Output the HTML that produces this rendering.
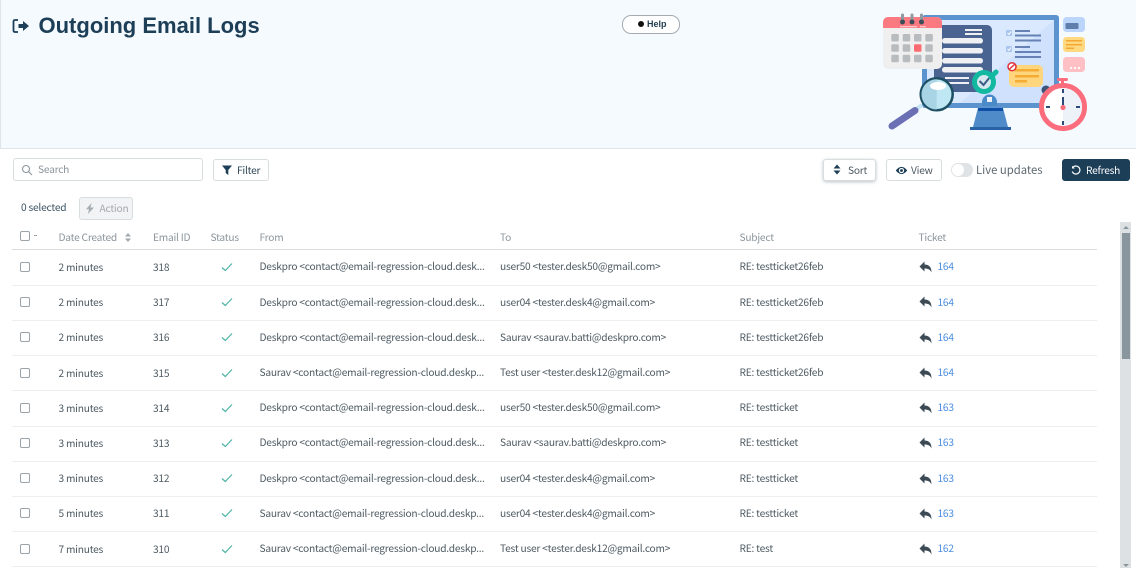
<!DOCTYPE html>
<html><head><meta charset="utf-8">
<style>
html,body{margin:0;padding:0;background:#fff}
body{width:1136px;height:568px;position:relative;overflow:hidden;font-family:"Noto Sans CJK JP","Liberation Sans",sans-serif;font-size:10.2px;letter-spacing:-.23px;color:#4d5a62}
.a{position:absolute;white-space:nowrap}
.t{line-height:14px;margin-top:-1px}
.hd{color:#8b959c;top:231px}
.sep{position:absolute;left:12px;width:1085px;height:1px;background:#eceeef}
.cb{position:absolute;left:20px;width:8px;height:8px;border:1px solid #9aa3a9;border-radius:2px;background:#fff}
.btn{position:absolute;box-sizing:border-box;background:#fff;border:1px solid #d8dde0;border-radius:3px;height:22px;top:159px;color:#2c4657;line-height:19px}
.lk{color:#4d8ee0}
svg[width="12"][height="10"]{margin-top:-1px}
</style></head><body>
<div class="a" style="left:0;top:0;width:1136px;height:148px;background:#f5faff;border-left:1px solid #dfe4e8;border-bottom:1px solid #dfe4e8;box-sizing:content-box"></div>
<svg class="a" style="left:12px;top:18px" width="18" height="16" viewBox="0 0 18 16"><path d="M6 2H3Q1.500 2 1.500 3.500V12.500Q1.500 14 3 14H6" fill="none" stroke="#1c3e57" stroke-width="1.800"/><path d="M6.500 6H11V3L17 8L11 13V10H6.500Z" fill="#1c3e57"/></svg>
<div class="a" style="left:38.500px;top:11px;font:bold 22px/30px 'Liberation Sans',sans-serif;color:#1c3e57;letter-spacing:0">Outgoing Email Logs</div>
<div class="a" style="left:622px;top:15px;width:56px;height:17px;border:1px solid #a4abb2;border-radius:9px;background:#fff"></div>
<div class="a" style="left:638px;top:21px;width:6px;height:6px;border-radius:3px;background:#111"></div>
<div class="a" style="left:647px;top:17px;font:bold 9px/14px 'Liberation Sans',sans-serif;letter-spacing:0;color:#1f3a4d">Help</div>

<svg class="a" style="left:860px;top:0" width="250" height="140" viewBox="860 0 250 140">
<rect x="922" y="15" width="137" height="93" rx="3" fill="#5b93cf"/>
<rect x="927" y="20" width="127" height="83" fill="#cfe1fd"/>
<path d="M927 20H1054L960 103H927Z" fill="#dbe9fe"/>
<rect x="934" y="25" width="58" height="67" rx="5" fill="#4a6491"/>
<g fill="#eef0f3"><rect x="965" y="29" width="17" height="2"/><rect x="965" y="33" width="17" height="2"/><rect x="942" y="38" width="41" height="5.500" rx="2.700"/><rect x="942" y="48" width="41" height="5.500" rx="2.700"/><rect x="942" y="58" width="41" height="5.500" rx="2.700"/><rect x="942" y="67" width="41" height="5.500" rx="2.700"/><rect x="945" y="77" width="24" height="2"/><rect x="945" y="82" width="24" height="2"/></g>
<g fill="#a9c4ef"><rect x="1006" y="30" width="6" height="6" rx="1"/><rect x="1006" y="46" width="6" height="6" rx="1"/></g>
<path d="M1007.500 33L1009 34.500L1011 31.500M1007.500 49L1009 50.500L1011 47.500" fill="none" stroke="#fff" stroke-width="1"/>
<g fill="#6682b4"><rect x="1015" y="30" width="15" height="2"/><rect x="1015" y="34.500" width="26" height="2"/><rect x="1015" y="39.500" width="26" height="2"/><rect x="1015" y="46" width="15" height="2"/><rect x="1015" y="51" width="26" height="2"/><rect x="1015" y="56" width="26" height="2"/></g>
<rect x="1009" y="65" width="34" height="22" rx="5" fill="#ffd67e"/>
<g fill="#f5ac35"><rect x="1015" y="69" width="24" height="2.500"/><rect x="1015" y="75" width="24" height="2.500"/><rect x="1015" y="80" width="12" height="2.500"/></g>
<circle cx="1012" cy="66.700" r="4" fill="#fff" stroke="#e0303a" stroke-width="1.500"/><path d="M1009.500 69L1014.500 64.500" stroke="#e0303a" stroke-width="1.500"/>
<path d="M978 108H1003L1008 127H973Z" fill="#4f8bc9"/><rect x="978" y="108" width="25" height="3" fill="#0f4fa8"/>
<rect x="970" y="127" width="41" height="3" fill="#2a62a8"/>
<path d="M982 106V102A7.500 7.500 0 0 1 997 102V106Z" fill="#4a8ac8"/><rect x="987" y="97" width="5" height="5" fill="#eef3fa"/>
<circle cx="984" cy="82" r="9.500" fill="#d5e8ee" stroke="#12b8a0" stroke-width="5"/>
<path d="M979.500 81L983.500 85L990 77" fill="none" stroke="#3d5d85" stroke-width="2"/><path d="M991 77L996 72" stroke="#12b8a0" stroke-width="5" stroke-linecap="round"/>
<rect x="883" y="17" width="59" height="52" rx="5" fill="#f0efef"/>
<path d="M883 28V22A5 5 0 0 1 888 17H937A5 5 0 0 1 942 22V28Z" fill="#fb7a82"/>
<g fill="#fdc4c7"><rect x="900" y="26" width="17" height="1.300"/><rect x="920" y="26" width="6" height="1.300"/></g>
<g stroke="#8f9aa2" stroke-width="3" stroke-linecap="round"><path d="M902.500 15V22M912 15V22M921.500 15V22"/></g>
<g fill="#3d4d57"><circle cx="902.500" cy="22" r="2.500"/><circle cx="912" cy="22" r="2.500"/><circle cx="921.500" cy="22" r="2.500"/></g>
<g fill="#b8bcbf"><rect x="891.300" y="34" width="7.500" height="7.500" rx="1.200"/><rect x="902.700" y="34" width="7.500" height="7.500" rx="1.200"/><rect x="914" y="34" width="7.500" height="7.500" rx="1.200"/><rect x="925.300" y="34" width="7.500" height="7.500" rx="1.200"/><rect x="891.300" y="44.300" width="7.500" height="7.500" rx="1.200"/><rect x="902.700" y="44.300" width="7.500" height="7.500" rx="1.200"/><rect x="925.300" y="44.300" width="7.500" height="7.500" rx="1.200"/><rect x="891.300" y="54.700" width="7.500" height="7.500" rx="1.200"/><rect x="902.700" y="54.700" width="7.500" height="7.500" rx="1.200"/><rect x="914" y="54.700" width="7.500" height="7.500" rx="1.200"/><rect x="925.300" y="54.700" width="7.500" height="7.500" rx="1.200"/></g>
<rect x="914" y="44.300" width="7.500" height="7.500" rx="1.200" fill="#fb6c72"/>
<path d="M915 110L922 105" stroke="#c3e4f2" stroke-width="4"/>
<path d="M892 126L915 110.500" stroke="#6b70b5" stroke-width="7" stroke-linecap="round"/>
<circle cx="936.700" cy="94.300" r="16" fill="#bfe6f3" stroke="#1d4f63" stroke-width="2.500"/>
<path d="M921.500 94.300A15 15 0 0 1 936.700 79.300V109.500A15 15 0 0 1 921.500 94.300Z" fill="#a9d4e6"/>
<ellipse cx="938" cy="86" rx="8" ry="4" fill="#fff"/>
<rect x="1063" y="17" width="22" height="15" rx="3.500" fill="#bcd5fb"/><rect x="1065.500" y="23" width="13" height="6" rx="1" fill="#5f7eab"/>
<rect x="1063" y="37" width="22" height="15" rx="3.500" fill="#ffd980"/><g fill="#f5a735"><rect x="1066" y="40" width="16" height="1.500"/><rect x="1066" y="44" width="16" height="1.500"/><rect x="1066" y="47.500" width="8" height="1.500"/></g>
<rect x="1063" y="57" width="22" height="15" rx="3.500" fill="#ffc0c5"/><g fill="#fff"><circle cx="1071" cy="68" r="1.100"/><circle cx="1075" cy="68" r="1.100"/><circle cx="1079" cy="68" r="1.100"/></g>
<circle cx="1046" cy="90" r="4.500" fill="#3b5578"/>
<rect x="1057" y="78" width="11" height="3" rx="1.500" fill="#fb6c7c"/><rect x="1061" y="80" width="3" height="5" fill="#fb6c7c"/>
<circle cx="1063" cy="107" r="21.500" fill="#fff" stroke="#fb6c7c" stroke-width="5"/>
<path d="M1063 88A19 19 0 0 1 1063 126Z" fill="#edf2f8"/>
<g fill="#2c4a7a"><rect x="1062" y="89" width="2" height="4"/><rect x="1062" y="121" width="2" height="4"/><rect x="1046" y="106" width="4" height="2"/><rect x="1076" y="106" width="4" height="2"/><rect x="1062" y="97" width="2" height="10"/></g>
<circle cx="1063" cy="107.500" r="2.600" fill="#fb6c7c"/>
</svg>

<div class="a" style="left:13px;top:158px;width:188px;height:21px;border:1px solid #d8dde0;border-radius:3px"></div>
<svg class="a" style="left:21px;top:164px" width="12" height="12" viewBox="0 0 12 12"><circle cx="5" cy="5" r="3.500" fill="none" stroke="#8d979e" stroke-width="1.100"/><path d="M7.700 7.700L11 11" stroke="#8d979e" stroke-width="1.100"/></svg>
<div class="a t" style="left:38px;top:163px;color:#8b959c">Search</div>
<div class="btn" style="left:213px;width:56px"></div>
<svg class="a" style="left:222px;top:165px" width="10" height="10" viewBox="0 0 10 10"><path d="M0 .5H10L6.300 5V10L3.700 8V5Z" fill="#1c3e57"/></svg>
<div class="a t" style="left:237px;top:163.500px;color:#2c4657">Filter</div>

<div class="btn" style="left:823px;width:53px;box-shadow:0 1px 3px rgba(60,80,95,.35)"></div>
<svg class="a" style="left:833px;top:164px" width="8" height="11" viewBox="0 0 8 11"><path d="M4 .5L7.500 4.500H.5ZM4 10.500L7.500 6.500H.5Z" fill="#1c3e57"/></svg>
<div class="a t" style="left:848px;top:163.500px">Sort</div>
<div class="btn" style="left:886px;width:56px"></div>
<svg class="a" style="left:894.500px;top:164.500px" width="13" height="11" viewBox="0 0 11 10"><path d="M.3 5Q5.500-1.500 10.700 5Q5.500 11.500 .3 5Z" fill="#1c3e57"/><circle cx="5.500" cy="5" r="2.400" fill="#fff"/><circle cx="5.500" cy="5" r="1.300" fill="#1c3e57"/></svg>
<div class="a t" style="left:911px;top:163.500px">View</div>
<div class="a" style="left:951px;top:163px;width:22px;height:14px;border-radius:7px;background:#dfe3e6"></div>
<div class="a" style="left:952px;top:164px;width:12px;height:12px;border-radius:6px;background:#fff"></div>
<div class="a" style="left:976px;top:162px;font-size:11.300px;letter-spacing:0;line-height:16px;color:#5d6970">Live updates</div>
<div class="a" style="left:1062px;top:159px;width:68px;height:22px;border-radius:3px;background:#1c3e57"></div>
<svg class="a" style="left:1071px;top:165px" width="10" height="10" viewBox="0 0 10 10"><path d="M2.300 2A4 4 0 1 1 1.200 6.500" fill="none" stroke="#fff" stroke-width="1.200"/><path d="M1 .7V3.500H3.800Z" fill="#fff"/></svg>
<div class="a t" style="left:1086px;top:163.500px;color:#fff">Refresh</div>

<div class="a t" style="left:21px;top:201px;color:#3c5363">0 selected</div>
<div class="a" style="left:79px;top:197px;width:52px;height:21px;border:1px solid #d8dde0;border-radius:3px;background:#f2f3f4"></div>
<svg class="a" style="left:86px;top:202.500px" width="8" height="11" viewBox="0 0 8 11"><path d="M5.500 0L0 6.300H3L2 11L8 4.500H4.500Z" fill="#a6adb2"/></svg>
<div class="a t" style="left:99.500px;top:202px;color:#a2a9ae">Action</div>

<div class="cb" style="top:231px"></div>
<div class="a" style="left:34px;top:235px;width:3px;height:1px;background:#99a1a6"></div>
<div class="a t hd" style="left:58.500px">Date Created</div>
<svg class="a" style="left:125px;top:233px" width="6" height="9" viewBox="0 0 6 9"><path d="M3 0L6 3.500H0ZM3 9L6 5.500H0Z" fill="#a2a9ae"/></svg>
<div class="a t hd" style="left:153px">Email ID</div>
<div class="a t hd" style="left:210.500px">Status</div>
<div class="a t hd" style="left:259.500px">From</div>
<div class="a t hd" style="left:500px">To</div>
<div class="a t hd" style="left:739.500px">Subject</div>
<div class="a t hd" style="left:918.500px">Ticket</div>
<div class="a" style="left:12px;top:249px;width:1085px;height:1px;background:#d9dde0"></div>

<div class="a" style="left:1120px;top:222px;width:11px;height:346px;background:#dde1e4"></div>
<div class="a" style="left:1122px;top:233px;width:8px;height:126px;background:#8a969e"></div>
<div class="a" style="left:1123px;top:226px;width:0;height:0;border-left:3px solid transparent;border-right:3px solid transparent;border-bottom:3px solid #8a969e"></div>

<svg width="0" height="0" style="position:absolute"><defs>
<symbol id="ck" viewBox="0 0 12 10"><path d="M1 5.500L4.300 8.500L11 1.500" fill="none" stroke="#4fb5a5" stroke-width="1.200"/></symbol>
<symbol id="rp" viewBox="0 0 13 12"><path d="M5.500 .5V3.500C10 3.500 12.500 6 12.500 11.500C11.200 8.500 9 7.500 5.500 7.500V10.500L.5 5.500Z" fill="#3b4a54"/></symbol>
</defs></svg>

<!-- row 1 -->
<div class="cb" style="top:262px"></div>
<div class="a t" style="left:58.500px;top:261px">2 minutes</div><div class="a t" style="left:153px;top:261px">318</div>
<svg class="a" style="left:221px;top:263px" width="12" height="10"><use href="#ck"/></svg>
<div class="a t" style="left:259.500px;top:260px">Deskpro &lt;contact@email-regression-cloud.desk...</div>
<div class="a t" style="left:500px;top:260px">user50 &lt;tester.desk50@gmail.com&gt;</div>
<div class="a t" style="left:739.500px;top:260px">RE: testticket26feb</div>
<svg class="a" style="left:919px;top:261px" width="13" height="12"><use href="#rp"/></svg><div class="a t lk" style="left:937.500px;top:260px">164</div>
<div class="sep" style="top:285px"></div>
<!-- row 2 -->
<div class="cb" style="top:297px"></div>
<div class="a t" style="left:58.500px;top:296px">2 minutes</div><div class="a t" style="left:153px;top:296px">317</div>
<svg class="a" style="left:221px;top:298px" width="12" height="10"><use href="#ck"/></svg>
<div class="a t" style="left:259.500px;top:295.500px">Deskpro &lt;contact@email-regression-cloud.desk...</div>
<div class="a t" style="left:500px;top:295.500px">user04 &lt;tester.desk4@gmail.com&gt;</div>
<div class="a t" style="left:739.500px;top:295.500px">RE: testticket26feb</div>
<svg class="a" style="left:919px;top:296px" width="13" height="12"><use href="#rp"/></svg><div class="a t lk" style="left:937.500px;top:295.500px">164</div>
<div class="sep" style="top:320px"></div>
<!-- row 3 -->
<div class="cb" style="top:332px"></div>
<div class="a t" style="left:58.500px;top:331px">2 minutes</div><div class="a t" style="left:153px;top:331px">316</div>
<svg class="a" style="left:221px;top:333px" width="12" height="10"><use href="#ck"/></svg>
<div class="a t" style="left:259.500px;top:331px">Deskpro &lt;contact@email-regression-cloud.desk...</div>
<div class="a t" style="left:500px;top:331px">Saurav &lt;saurav.batti@deskpro.com&gt;</div>
<div class="a t" style="left:739.500px;top:331px">RE: testticket26feb</div>
<svg class="a" style="left:919px;top:332px" width="13" height="12"><use href="#rp"/></svg><div class="a t lk" style="left:937.500px;top:331px">164</div>
<div class="sep" style="top:355px"></div>
<!-- row 4 -->
<div class="cb" style="top:367.500px"></div>
<div class="a t" style="left:58.500px;top:367px">2 minutes</div><div class="a t" style="left:153px;top:367px">315</div>
<svg class="a" style="left:221px;top:369px" width="12" height="10"><use href="#ck"/></svg>
<div class="a t" style="left:259.500px;top:366px">Saurav &lt;contact@email-regression-cloud.deskp...</div>
<div class="a t" style="left:500px;top:366px">Test user &lt;tester.desk12@gmail.com&gt;</div>
<div class="a t" style="left:739.500px;top:366px">RE: testticket26feb</div>
<svg class="a" style="left:919px;top:367px" width="13" height="12"><use href="#rp"/></svg><div class="a t lk" style="left:937.500px;top:366px">164</div>
<div class="sep" style="top:390px"></div>
<!-- row 5 -->
<div class="cb" style="top:403px"></div>
<div class="a t" style="left:58.500px;top:402px">3 minutes</div><div class="a t" style="left:153px;top:402px">314</div>
<svg class="a" style="left:221px;top:404px" width="12" height="10"><use href="#ck"/></svg>
<div class="a t" style="left:259.500px;top:401px">Deskpro &lt;contact@email-regression-cloud.desk...</div>
<div class="a t" style="left:500px;top:401px">user50 &lt;tester.desk50@gmail.com&gt;</div>
<div class="a t" style="left:739.500px;top:401px">RE: testticket</div>
<svg class="a" style="left:919px;top:402px" width="13" height="12"><use href="#rp"/></svg><div class="a t lk" style="left:937.500px;top:401px">163</div>
<div class="sep" style="top:426px"></div>
<!-- row 6 -->
<div class="cb" style="top:438px"></div>
<div class="a t" style="left:58.500px;top:437px">3 minutes</div><div class="a t" style="left:153px;top:437px">313</div>
<svg class="a" style="left:221px;top:439px" width="12" height="10"><use href="#ck"/></svg>
<div class="a t" style="left:259.500px;top:436px">Deskpro &lt;contact@email-regression-cloud.desk...</div>
<div class="a t" style="left:500px;top:436px">Saurav &lt;saurav.batti@deskpro.com&gt;</div>
<div class="a t" style="left:739.500px;top:436px">RE: testticket</div>
<svg class="a" style="left:919px;top:437px" width="13" height="12"><use href="#rp"/></svg><div class="a t lk" style="left:937.500px;top:436px">163</div>
<div class="sep" style="top:461px"></div>
<!-- row 7 -->
<div class="cb" style="top:473px"></div>
<div class="a t" style="left:58.500px;top:472px">3 minutes</div><div class="a t" style="left:153px;top:472px">312</div>
<svg class="a" style="left:221px;top:474px" width="12" height="10"><use href="#ck"/></svg>
<div class="a t" style="left:259.500px;top:472px">Deskpro &lt;contact@email-regression-cloud.desk...</div>
<div class="a t" style="left:500px;top:472px">user04 &lt;tester.desk4@gmail.com&gt;</div>
<div class="a t" style="left:739.500px;top:472px">RE: testticket</div>
<svg class="a" style="left:919px;top:473px" width="13" height="12"><use href="#rp"/></svg><div class="a t lk" style="left:937.500px;top:472px">163</div>
<div class="sep" style="top:496px"></div>
<!-- row 8 -->
<div class="cb" style="top:508px"></div>
<div class="a t" style="left:58.500px;top:507px">5 minutes</div><div class="a t" style="left:153px;top:507px">311</div>
<svg class="a" style="left:221px;top:509px" width="12" height="10"><use href="#ck"/></svg>
<div class="a t" style="left:259.500px;top:507px">Saurav &lt;contact@email-regression-cloud.deskp...</div>
<div class="a t" style="left:500px;top:507px">user04 &lt;tester.desk4@gmail.com&gt;</div>
<div class="a t" style="left:739.500px;top:507px">RE: testticket</div>
<svg class="a" style="left:919px;top:508px" width="13" height="12"><use href="#rp"/></svg><div class="a t lk" style="left:937.500px;top:507px">163</div>
<div class="sep" style="top:531px"></div>
<!-- row 9 -->
<div class="cb" style="top:544px"></div>
<div class="a t" style="left:58.500px;top:543px">7 minutes</div><div class="a t" style="left:153px;top:543px">310</div>
<svg class="a" style="left:221px;top:545px" width="12" height="10"><use href="#ck"/></svg>
<div class="a t" style="left:259.500px;top:542px">Saurav &lt;contact@email-regression-cloud.deskp...</div>
<div class="a t" style="left:500px;top:542px">Test user &lt;tester.desk12@gmail.com&gt;</div>
<div class="a t" style="left:739.500px;top:542px">RE: test</div>
<svg class="a" style="left:919px;top:543px" width="13" height="12"><use href="#rp"/></svg><div class="a t lk" style="left:937.500px;top:542px">162</div>
<div class="sep" style="top:566px"></div>
<div class="a" style="left:1123px;top:564px;width:0;height:0;border-left:3px solid transparent;border-right:3px solid transparent;border-top:3px solid #8a969e"></div>
</body></html>
